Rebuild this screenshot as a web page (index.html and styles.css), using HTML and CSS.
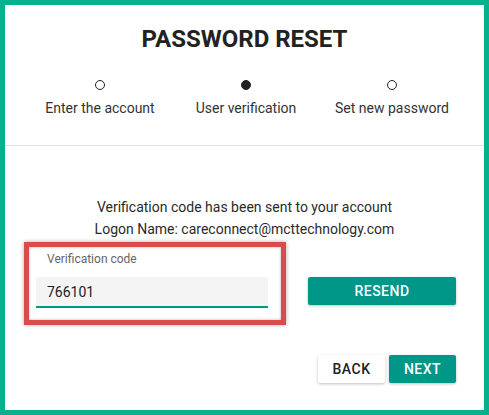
FILE: index.html
```html
<!DOCTYPE html>
<html lang="en">
<head>
  <meta charset="UTF-8">
  <meta name="viewport" content="width=device-width, initial-scale=1.0">
  <title>Password reset</title>
  <link rel="stylesheet" href="styles.css">
</head>
<body>
  <div class="frame">
    <header class="head">
      <h1>PASSWORD RESET</h1>
      <ol class="steps">
        <li><span class="dot"></span>Enter the account</li>
        <li class="current"><span class="dot"></span>User verification</li>
        <li><span class="dot"></span>Set new password</li>
      </ol>
    </header>

    <main class="content">
      <p class="msg">
        Verification code has been sent to your account<br>
        Logon Name: careconnect@mcttechnology.com
      </p>

      <div class="code-row">
        <div class="callout">
          <label for="code">Verification code</label>
          <input id="code" type="text" value="766101">
        </div>
        <button class="btn primary resend">RESEND</button>
      </div>

      <div class="actions">
        <button class="btn">BACK</button>
        <button class="btn primary">NEXT</button>
      </div>
    </main>
  </div>
</body>
</html>
```

FILE: styles.css
```css
body { margin: 0; font-family: Roboto, "Liberation Sans", sans-serif; background: #fff; }
.frame {
  width: 489px;
  height: 415px;
  box-sizing: border-box;
  border: 5px solid #08b08e;
  background: #fff;
}
.head {
  padding: 20px 0 27px;
  border-bottom: 1px solid #e2e2e2;
  text-align: center;
}
h1 {
  margin: 0;
  font-size: 24px;
  line-height: 28px;
  font-weight: 700;
  color: #222;
}
.steps {
  list-style: none;
  margin: 27px 0 0;
  padding: 0 0 0 3px;
  display: grid;
  grid-template-columns: repeat(3, 146px);
  justify-content: center;
}
.steps li {
  display: flex;
  flex-direction: column;
  align-items: center;
  gap: 8px;
  font-size: 14px;
  line-height: 20px;
  color: #333;
}
.dot {
  width: 10px;
  height: 10px;
  box-sizing: border-box;
  border: 1.5px solid #222;
  border-radius: 50%;
}
.current .dot { background: #222; }
.content {
  padding: 50px 28px 0 19px;
}
.msg {
  margin: 0;
  padding-left: 9px;
  text-align: center;
  font-size: 14px;
  line-height: 22px;
  color: #2a2a2a;
}
.code-row {
  display: flex;
  align-items: flex-start;
  gap: 22px;
  margin-top: 2px;
}
.callout {
  width: 262px;
  box-sizing: border-box;
  border: 5px solid #db4b4b;
  padding: 4px 13px 12px 7px;
  box-shadow: 0 0 4px rgba(0, 0, 0, .35), inset 0 0 3px rgba(0, 0, 0, .3);
  display: flex;
  flex-direction: column;
  gap: 10px;
}
.callout label {
  padding-left: 11px;
  font-size: 12px;
  line-height: 16px;
  color: #666;
}
.callout input {
  height: 31px;
  box-sizing: border-box;
  border: none;
  border-bottom: 2px solid #009688;
  background: #f4f4f4;
  padding: 0 11px;
  font-family: inherit;
  font-size: 14px;
  color: #222;
  outline: none;
}
.btn {
  height: 28px;
  width: 67px;
  border: none;
  border-radius: 2px;
  background: #fff;
  color: #222;
  font-family: inherit;
  font-size: 14px;
  font-weight: 500;
  letter-spacing: .5px;
  box-shadow: 0 1px 3px rgba(0, 0, 0, .25);
  cursor: pointer;
}
.btn.primary {
  background: #009688;
  color: #fff;
}
.resend {
  width: 148px;
  margin-top: 35px;
}
.actions {
  display: flex;
  justify-content: flex-end;
  gap: 4px;
  margin-top: 30px;
}
```
